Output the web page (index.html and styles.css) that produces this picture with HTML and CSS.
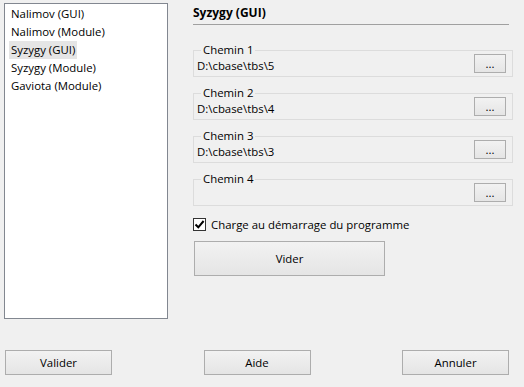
FILE: index.html
```html
<!DOCTYPE html>
<html lang="fr">
<head>
    <meta charset="UTF-8">
    <title>Tables de finales</title>
    <link rel="stylesheet" href="styles.css">
</head>
<body>
<div class="dialog">
    <div class="main">
        <ul class="list">
            <li><span>Nalimov (GUI)</span></li>
            <li><span>Nalimov (Module)</span></li>
            <li class="sel"><span>Syzygy (GUI)</span></li>
            <li><span>Syzygy (Module)</span></li>
            <li><span>Gaviota (Module)</span></li>
        </ul>
        <div class="panel">
            <h1>Syzygy (GUI)</h1>
            <fieldset class="path">
                <legend>Chemin 1</legend>
                <div class="row">
                    <span class="value">D:\cbase\tbs\5</span>
                    <button class="btn browse">...</button>
                </div>
            </fieldset>
            <fieldset class="path">
                <legend>Chemin 2</legend>
                <div class="row">
                    <span class="value">D:\cbase\tbs\4</span>
                    <button class="btn browse">...</button>
                </div>
            </fieldset>
            <fieldset class="path">
                <legend>Chemin 3</legend>
                <div class="row">
                    <span class="value">D:\cbase\tbs\3</span>
                    <button class="btn browse">...</button>
                </div>
            </fieldset>
            <fieldset class="path">
                <legend>Chemin 4</legend>
                <div class="row">
                    <span class="value"></span>
                    <button class="btn browse">...</button>
                </div>
            </fieldset>
            <label class="check">
                <span class="box">
                    <svg width="11" height="11" viewBox="0 0 11 11"><path d="M1.5 5.5 L4.3 8.3 L9.6 2" fill="none" stroke="#000" stroke-width="2"/></svg>
                </span>
                Charge au démarrage du programme
            </label>
            <button class="btn clear">Vider</button>
        </div>
    </div>
    <div class="actions">
        <button class="btn">Valider</button>
        <button class="btn">Aide</button>
        <button class="btn">Annuler</button>
    </div>
</div>
</body>
</html>
```

FILE: styles.css
```css
html,body,ul,h1{
    padding:0;
    margin:0;
}
body{
    background:#f0f0f0;
    font-family:"Open Sans","Noto Sans",sans-serif;
    font-size:11.4px;
    color:#000;
}
.dialog{
    width:524px;
    height:387px;
}
.main{
    display:flex;
    padding:3px 0 0 4px;
}
.list{
    list-style-type:none;
    width:162px;
    height:313px;
    padding-top:1px;
    background:#fff;
    border:1px solid #828790;
}
.list li{
    height:18px;
    line-height:18px;
    padding-left:4px;
}
.list li span{
    display:inline-block;
    padding:0 2px;
}
.list li.sel span{
    background:#e5e5e5;
}
.panel{
    width:320px;
    margin-left:25px;
}
h1{
    font-size:12px;
    font-weight:bold;
    line-height:16px;
    width:316px;
    padding-top:2px;
    padding-bottom:3px;
    border-bottom:1px solid #a0a0a0;
}
.path{
    margin:9px 0 0 0;
    padding:0 6px 3px 3px;
    border:1px solid #dcdcdc;
    min-inline-size:0;
}
.path:first-of-type{
    margin-top:18px;
}
.path legend{
    line-height:14px;
    padding:0 2px;
    margin-left:4px;
}
.row{
    display:flex;
    justify-content:space-between;
    margin-top:-3px;
    height:19px;
}
.row .value{
    align-self:flex-end;
    line-height:15px;
}
.btn{
    font-family:inherit;
    font-size:11.4px;
    color:#000;
    background:linear-gradient(#f2f2f2,#e5e5e5);
    border:1px solid #adadad;
    padding:0;
    border-radius:0;
}
.browse{
    width:32px;
    height:19px;
    line-height:12px;
}
.check{
    display:flex;
    align-items:center;
    gap:5px;
    margin-top:10px;
    height:16px;
}
.check .box{
    width:11px;
    height:11px;
    border:1px solid #333;
    background:#fff;
    display:flex;
}
.clear{
    display:block;
    width:191px;
    height:35px;
    margin:9px 0 0 1px;
}
.actions{
    display:flex;
    justify-content:space-between;
    padding:31px 15px 0 5px;
}
.actions .btn{
    width:107px;
    height:25px;
}
```
